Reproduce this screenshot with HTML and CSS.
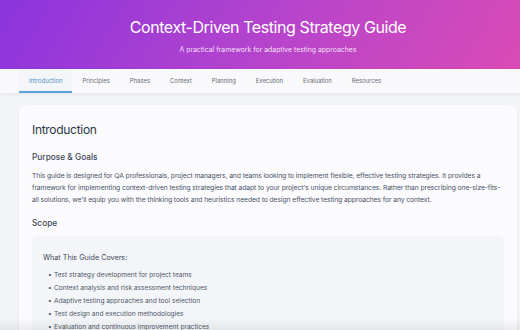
FILE: index.html
```html
<!DOCTYPE html>
<html lang="en">
<head>
    <meta charset="UTF-8">
    <meta name="viewport" content="width=device-width, initial-scale=1.0">
    <title>Context-Driven Testing Strategy Guide</title>
    <link rel="stylesheet" href="styles.css">
</head>
<body>
    <div class="page">
        <!-- Header -->
        <header class="hero">
            <h1>Context-Driven Testing Strategy Guide</h1>
            <p class="subtitle">A practical framework for adaptive testing approaches</p>
        </header>

        <!-- Tabs -->
        <nav class="tabs">
            <a class="tab active" href="#">Introduction</a>
            <a class="tab" href="#">Principles</a>
            <a class="tab" href="#">Phases</a>
            <a class="tab" href="#">Context</a>
            <a class="tab" href="#">Planning</a>
            <a class="tab" href="#">Execution</a>
            <a class="tab" href="#">Evaluation</a>
            <a class="tab" href="#">Resources</a>
        </nav>

        <main class="content">
            <section class="card">
                <h2>Introduction</h2>

                <h3>Purpose &amp; Goals</h3>
                <p>This guide is designed for QA professionals, project managers, and teams looking to implement flexible, effective testing strategies. It provides a framework for implementing context-driven testing strategies that adapt to your project's unique circumstances. Rather than prescribing one-size-fits-all solutions, we'll equip you with the thinking tools and heuristics needed to design effective testing approaches for any context.</p>

                <h3>Scope</h3>
                <div class="scope-box">
                    <h4>What This Guide Covers:</h4>
                    <ul>
                        <li>Test strategy development for project teams</li>
                        <li>Context analysis and risk assessment techniques</li>
                        <li>Adaptive testing approaches and tool selection</li>
                        <li>Test design and execution methodologies</li>
                        <li>Evaluation and continuous improvement practices</li>
                    </ul>
                </div>
            </section>
        </main>
    </div>
    <div class="bottom-fade"></div>
</body>
</html>
```

FILE: styles.css
```css
html {
    overflow: hidden;
}

body {
    margin: 0;
    padding: 0;
    background-color: #f3f4f7;
    font-family: 'Inter', 'Liberation Sans', sans-serif;
    color: #4a5568;
}

.page {
    width: 536px;
}

.hero {
    background: linear-gradient(120deg, #8b34de 0%, #b544cc 50%, #dc4bb4 100%);
    color: #fff;
    text-align: center;
    padding: 17px 0 13px;
    height: 39px;
}

.hero h1 {
    margin: 0;
    font-size: 16px;
    font-weight: 400;
    letter-spacing: -0.42px;
    line-height: 20px;
}

.subtitle {
    margin: 9px 0 0;
    font-size: 6.9px;
    line-height: 8px;
    color: rgba(255, 255, 255, 0.85);
}

.tabs {
    display: flex;
    background-color: #f9f9fb;
    padding: 0 19px;
    height: 24px;
    box-shadow: 0 1px 3px rgba(0, 0, 0, 0.08);
}

.tab {
    display: flex;
    align-items: center;
    padding: 0 10px;
    font-size: 5.9px;
    color: #666c75;
    text-decoration: none;
    border-bottom: 2px solid transparent;
}

.tab.active {
    color: #4a90c8;
    background-color: #f3f5f8;
    border-bottom-color: #5aa6dc;
}

.content {
    padding: 12px 19px 0;
}

.card {
    background-color: #fbfbfd;
    border-radius: 6px;
    padding: 16px 13px 20px;
    box-shadow: 0 1px 3px rgba(0, 0, 0, 0.05);
}

.card h2 {
    margin: 0 0 12px;
    font-size: 12px;
    font-weight: 400;
    letter-spacing: -0.3px;
    color: #2d3748;
    line-height: 18px;
}

.card h3 {
    margin: 0 0 6px;
    font-size: 8.3px;
    font-weight: 500;
    color: #3d4756;
    line-height: 13px;
}

.card p {
    margin: 0 0 11px;
    font-size: 6.8px;
    letter-spacing: -0.1px;
    line-height: 12px;
    color: #4a5568;
}

.scope-box {
    background-color: #f4f5f8;
    border-radius: 6px;
    padding: 17px 11px 8px;
}

.scope-box h4 {
    margin: 0 0 6px;
    font-size: 7.2px;
    font-weight: 400;
    color: #3d4756;
    line-height: 10px;
}

.scope-box ul {
    margin: 0;
    padding-left: 5px;
    list-style: none;
}

.scope-box li {
    display: flex;
    font-size: 6.6px;
    line-height: 13px;
}

.scope-box li::before {
    content: "\2022";
    width: 6px;
}

.bottom-fade {
    position: fixed;
    left: 0;
    right: 0;
    bottom: 0;
    height: 12px;
    background: linear-gradient(rgba(0, 0, 0, 0), rgba(0, 0, 0, 0.06));
}
```
